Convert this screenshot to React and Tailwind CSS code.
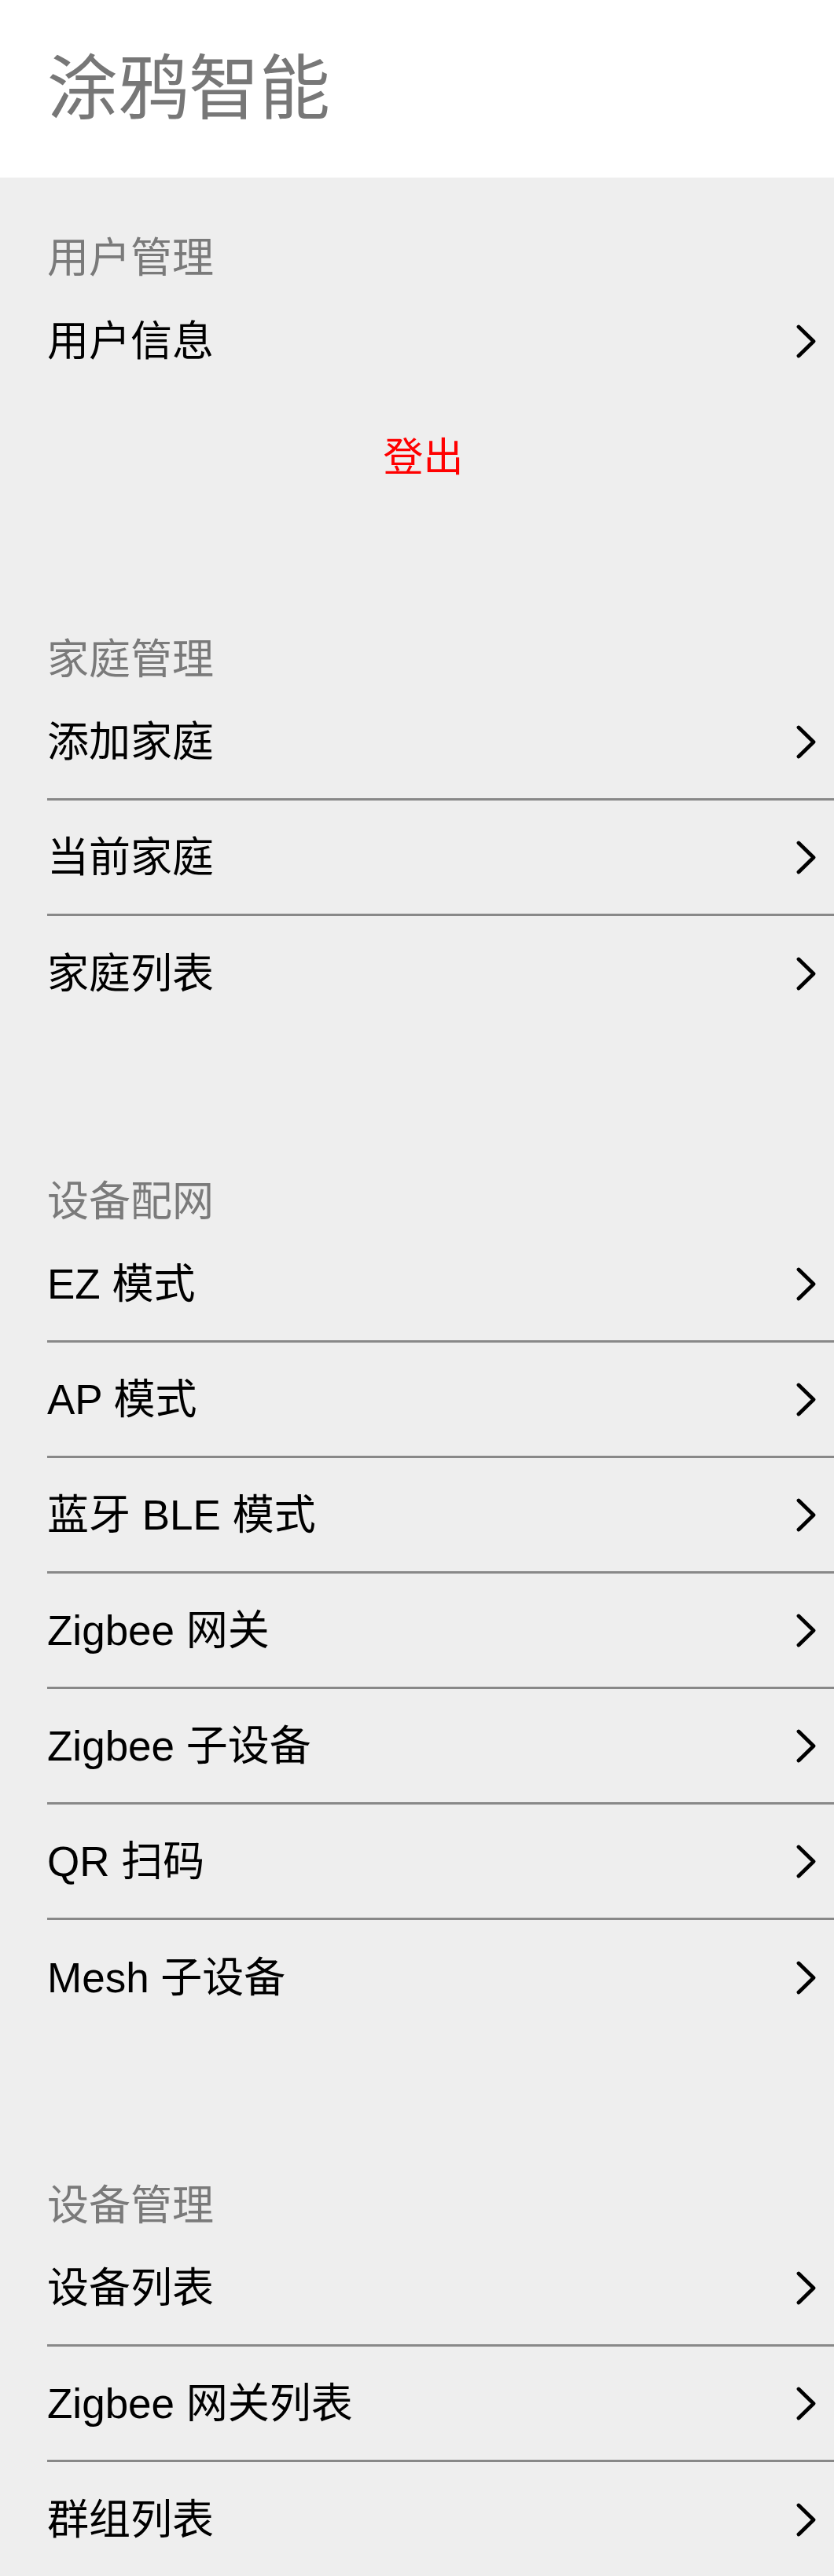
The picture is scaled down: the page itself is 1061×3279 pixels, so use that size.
import React from 'react';

const sections = [
  { title: '用户管理', items: ['用户信息'], logout: true },
  { title: '家庭管理', items: ['添加家庭', '当前家庭', '家庭列表'] },
  { title: '设备配网', items: ['EZ 模式', 'AP 模式', '蓝牙 BLE 模式', 'Zigbee 网关', 'Zigbee 子设备', 'QR 扫码', 'Mesh 子设备'] },
  { title: '设备管理', items: ['设备列表', 'Zigbee 网关列表', '群组列表'] },
];

function Chevron() {
  return (
    <svg width="25" height="43" viewBox="0 0 25 43" fill="none">
      <path d="M3 3 L22 21.5 L3 40" stroke="#000" strokeWidth="4.8" strokeLinecap="round" strokeLinejoin="round" />
    </svg>
  );
}

function Row({ label, last }) {
  return (
    <div className={`ml-[60px] h-[147px] flex items-center justify-between pr-[23px] ${last ? '' : 'border-b-[3px] border-[#888888]'}`}>
      <span className="text-[53px] leading-none text-black">{label}</span>
      <Chevron />
    </div>
  );
}

export default function App() {
  return (
    <div className="w-[1061px] min-h-[3279px] bg-[#eeeeee] font-['Liberation_Sans','Noto_Sans_CJK_SC',sans-serif]">
      <div className="h-[226px] bg-white flex items-center pl-[60px]">
        <h1 className="text-[90px] leading-none text-[#777777] font-normal">涂鸦智能</h1>
      </div>

      <div className="pt-[69px]">
        {sections.map((s, si) => (
          <div key={s.title} className={si === 0 ? '' : si === 1 ? 'mt-[150px]' : 'mt-[183px]'}>
            <div className="h-[66px] flex items-center pl-[60px] text-[53px] leading-none text-[#7a7a7a]">{s.title}</div>
            {s.items.map((it, i) => (
              <Row key={it} label={it} last={i === s.items.length - 1} />
            ))}
            {s.logout && (
              <div className="h-[148px] flex items-center justify-center pl-[16px]">
                <button className="text-[51px] leading-none text-[#ff0000]">登出</button>
              </div>
            )}
          </div>
        ))}
      </div>
    </div>
  );
}
